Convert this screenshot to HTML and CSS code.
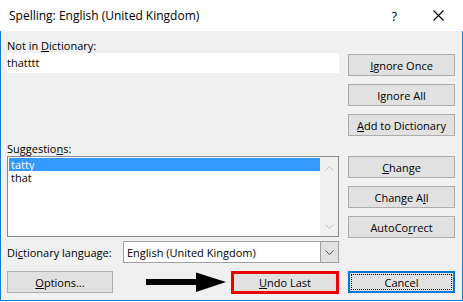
FILE: index.html
```html
<!DOCTYPE html>
<html>
<head>
<title>Spelling: English (United Kingdom)</title>
<link rel="stylesheet" href="styles.css">
</head>
<body>

<div class="window">
  <div class="titlebar">
    <span class="title">Spelling: English (United Kingdom)</span>
    <span class="help">?</span>
    <svg class="close" width="11" height="11" viewBox="0 0 11 11">
      <path d="M0.5 0.5 L10.5 10.5 M10.5 0.5 L0.5 10.5" stroke="#000" stroke-width="1.1" fill="none"/>
    </svg>
  </div>

  <div class="content">
    <div class="main">
      <div class="left">
        <label class="lbl first">Not in <u>D</u>ictionary:</label>
        <div class="textbox">thatttt</div>

        <label class="lbl sugg">Suggestio<u>n</u>s:</label>
        <div class="listbox">
          <div class="items">
            <div class="item selected"><span>tatty</span></div>
            <div class="item"><span>that</span></div>
          </div>
          <div class="scrollbar">
            <svg width="9" height="5" viewBox="0 0 9 5"><path d="M0.5 4.5 L4.5 0.5 L8.5 4.5" stroke="#c2c2c2" fill="none"/></svg>
            <svg width="9" height="5" viewBox="0 0 9 5"><path d="M0.5 0.5 L4.5 4.5 L8.5 0.5" stroke="#c2c2c2" fill="none"/></svg>
          </div>
        </div>

        <div class="lang-row">
          <label class="lbl">Di<u>c</u>tionary language:</label>
          <div class="combo">
            <span class="combo-text">English (United Kingdom)</span>
            <span class="drop">
              <svg width="9" height="5" viewBox="0 0 9 5"><path d="M0.5 0.5 L4.5 4.5 L8.5 0.5" stroke="#505050" fill="none"/></svg>
            </span>
          </div>
        </div>
      </div>

      <div class="buttons">
        <button class="btn"><u>I</u>gnore Once</button>
        <button class="btn">I<u>g</u>nore All</button>
        <button class="btn gap-after"><u>A</u>dd to Dictionary</button>
        <button class="btn"><u>C</u>hange</button>
        <button class="btn">Change A<u>l</u>l</button>
        <button class="btn">AutoCo<u>r</u>rect</button>
      </div>
    </div>

    <div class="footer">
      <button class="btn options"><u>O</u>ptions...</button>
      <svg class="arrow" width="80" height="22" viewBox="0 0 80 22">
        <rect x="0" y="8" width="52" height="6" fill="#000"/>
        <polygon points="50,1.5 80,11 50,21" fill="#000"/>
      </svg>
      <button class="btn undo"><u>U</u>ndo Last</button>
      <button class="btn cancel">Cancel</button>
    </div>
  </div>
</div>

</body>
</html>
```

FILE: styles.css
```css
body {
  margin: 0;
  background: #ffffff;
  font-family: "Open Sans", "Noto Sans", sans-serif;
  font-size: 11px;
  color: #000;
}

.window {
  width: 463px;
  height: 302px;
}

/* Title bar */
.titlebar {
  height: 31px;
  background: #ffffff;
  display: flex;
  align-items: center;
  padding-left: 9px;
}

.title {
  font-size: 12px;
  flex: 1;
}

.help {
  font-size: 13px;
  margin-right: 36px;
}

.close {
  margin-right: 19px;
}

/* Dialog body */
.content {
  background: #f0f0f0;
  border: 1px solid #1979ca;
  border-top: none;
  padding: 0 6px 6px 6px;
}

.main {
  display: flex;
  gap: 9px;
}

.left {
  width: 332px;
  display: flex;
  flex-direction: column;
}

.lbl {
  display: block;
  line-height: 15px;
  white-space: nowrap;
}

.lbl.first {
  margin-top: 7px;
}

.lbl.sugg {
  margin-top: 68px;
}

u {
  text-underline-offset: 1px;
}

.textbox {
  height: 20px;
  line-height: 20px;
  background: #ffffff;
}

/* Suggestions list */
.listbox {
  height: 81px;
  box-sizing: border-box;
  border: 1px solid #828790;
  background: #ffffff;
  display: flex;
}

.items {
  flex: 1;
  padding: 1px 0 0 1px;
}

.item {
  height: 13px;
  padding-left: 2px;
  overflow: hidden;
}

.item span {
  display: block;
  line-height: 13px;
  height: 13px;
}

.item.selected {
  background: #3399ff;
  color: #ffffff;
}

.scrollbar {
  width: 18px;
  background: #f0f0f0;
  display: flex;
  flex-direction: column;
  justify-content: space-between;
  align-items: center;
  padding: 9px 0 7px 0;
}

/* Language row */
.lang-row {
  margin-top: 4px;
  height: 22px;
  display: flex;
  align-items: center;
}

.combo {
  margin-left: auto;
  width: 216px;
  height: 22px;
  box-sizing: border-box;
  border: 1px solid #a0a0a0;
  background: #ffffff;
  display: flex;
  align-items: center;
}

.combo-text {
  flex: 1;
  padding-left: 3px;
}

.drop {
  width: 17px;
  height: 20px;
  background: #e1e1e1;
  border-left: 1px solid #a0a0a0;
  display: flex;
  align-items: center;
  justify-content: center;
}

/* Buttons */
.buttons {
  width: 107px;
  padding-top: 23px;
  display: flex;
  flex-direction: column;
  gap: 8px;
}

.btn {
  height: 22px;
  box-sizing: border-box;
  border: 1px solid #adadad;
  background: #e1e1e1;
  font-family: inherit;
  font-size: 11px;
  color: #000;
  padding: 0;
  margin: 0;
}

.buttons .btn {
  width: 107px;
}

.gap-after {
  margin-bottom: 12px;
}

/* Bottom row */
.footer {
  margin-top: 8px;
  display: flex;
  align-items: flex-start;
}

.options {
  width: 106px;
}

.arrow {
  margin-left: 33px;
}

.undo {
  margin-left: 5px;
  width: 108px;
  height: 23px;
  border: 3px solid #ee0000;
}

.cancel {
  margin-left: 9px;
  width: 107px;
  border: 2px solid #0078d7;
  outline: 1px dotted #000;
  outline-offset: -4px;
}
```
